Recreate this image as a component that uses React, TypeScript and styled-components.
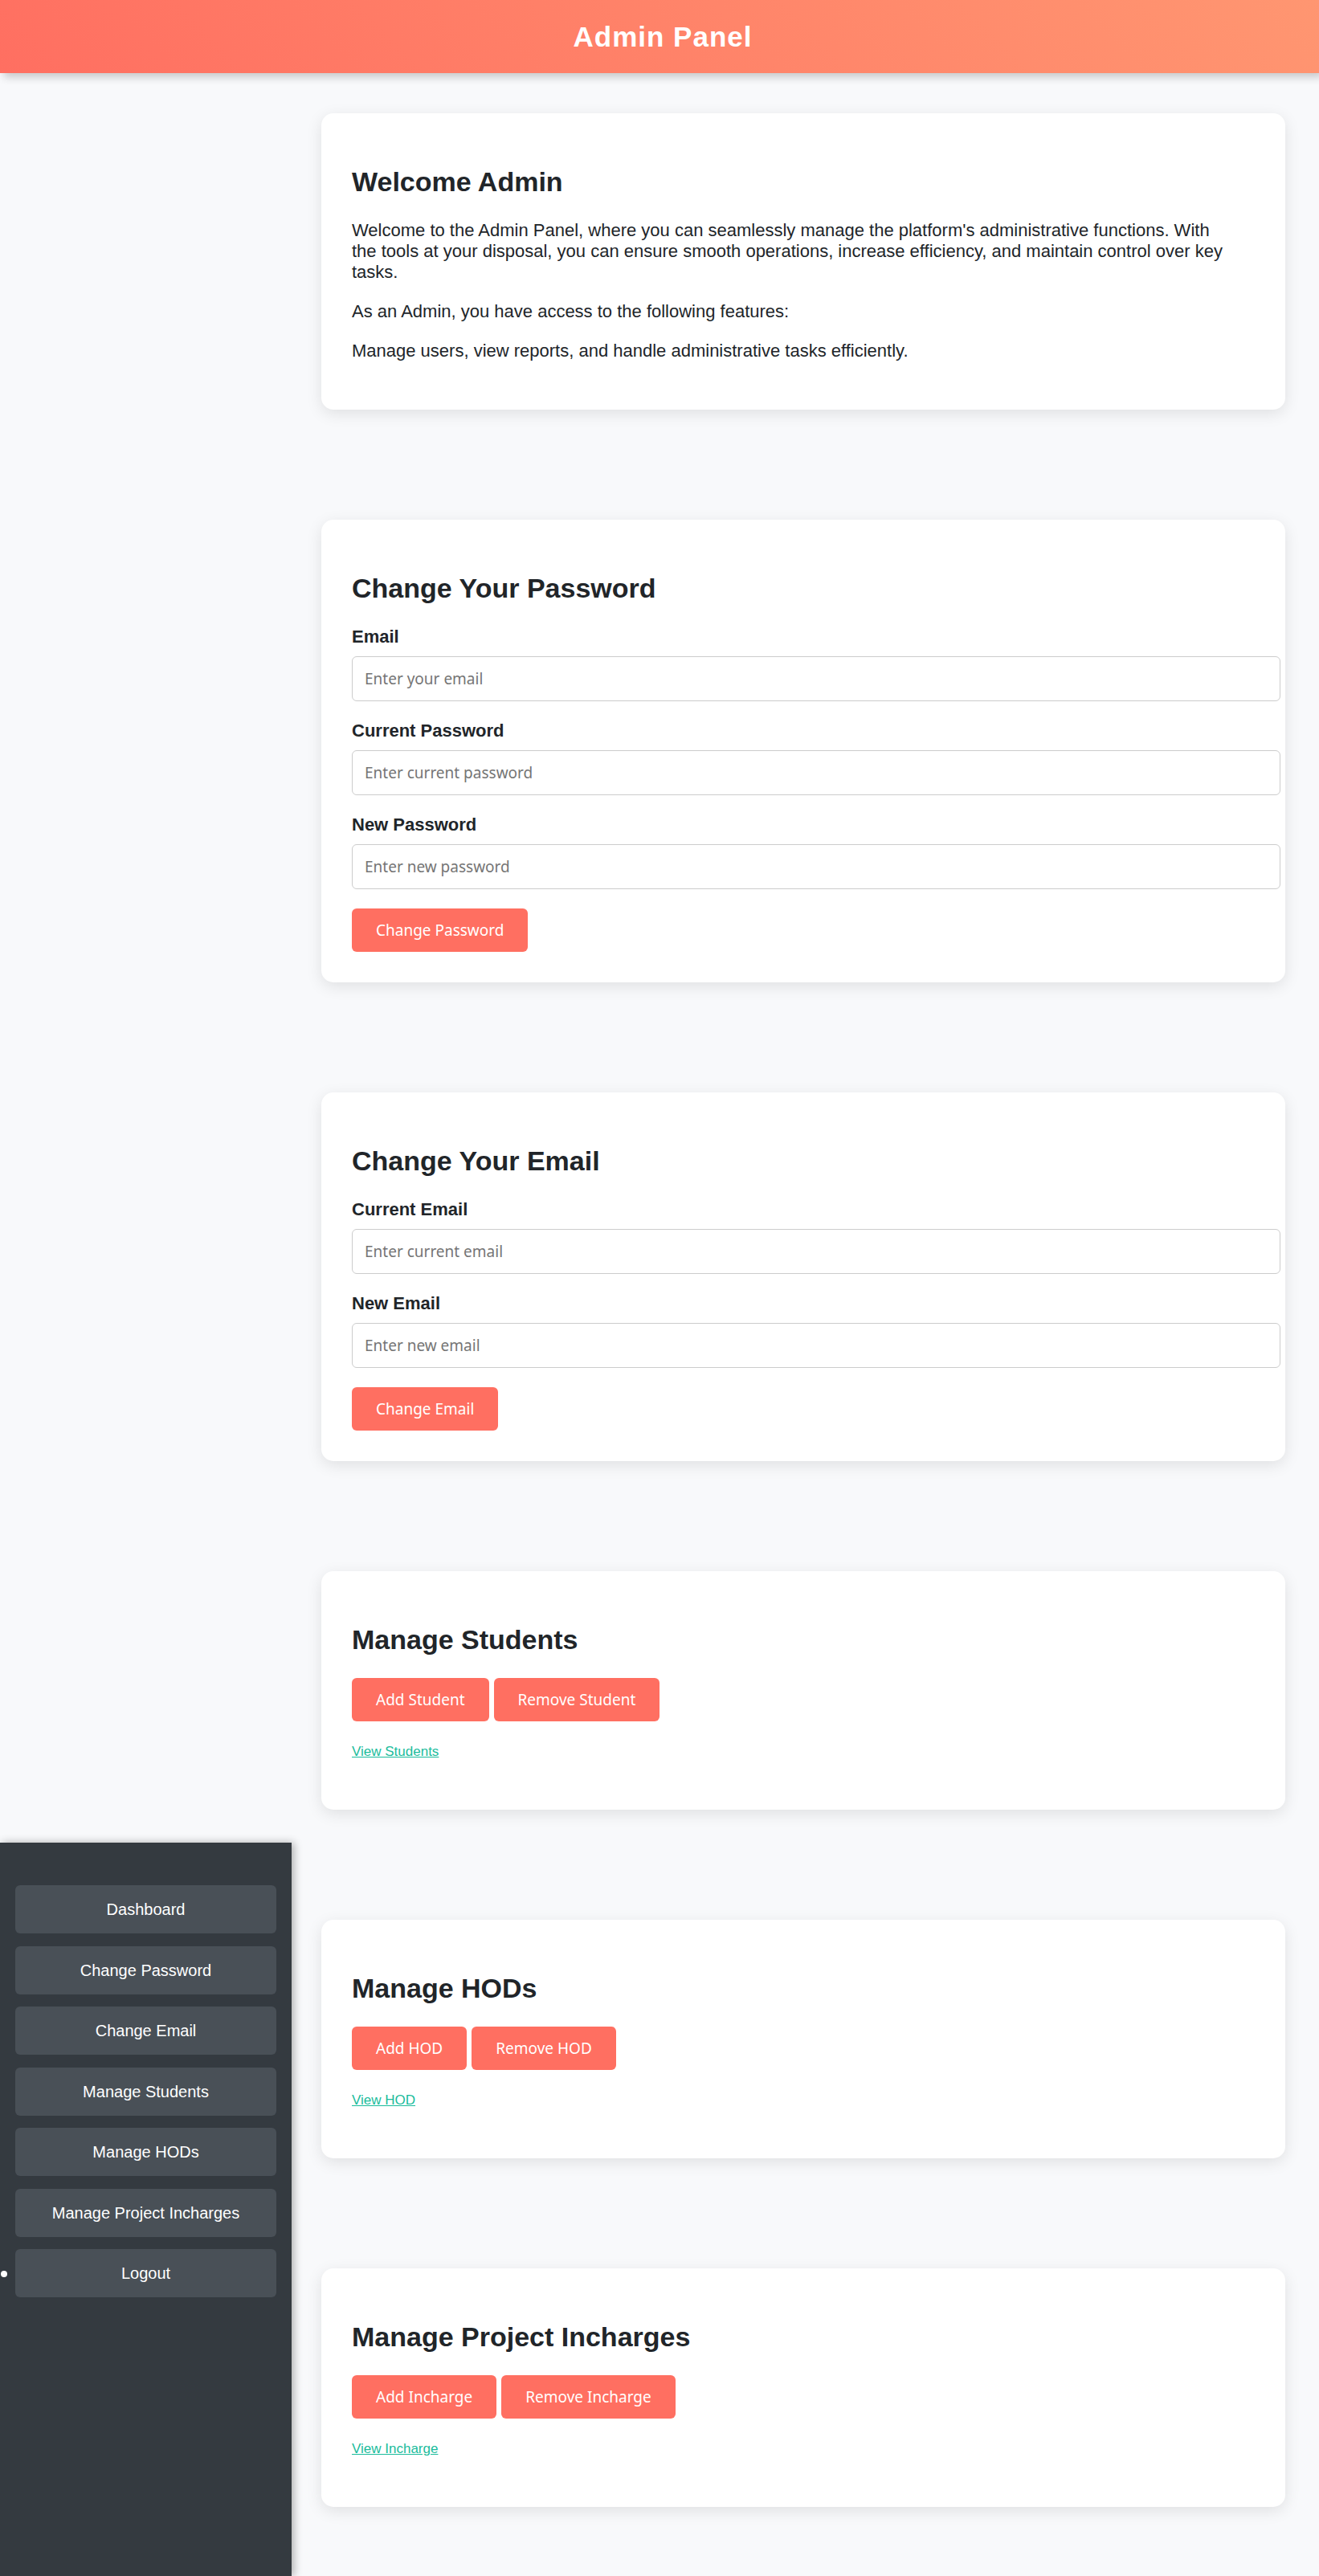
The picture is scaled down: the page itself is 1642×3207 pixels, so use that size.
import React from "react";
import styled, { createGlobalStyle } from "styled-components";

const sans = `"Liberation Sans", Arial, Helvetica, sans-serif`;
const controlFont = `"Noto Sans", Tahoma, sans-serif`;

const GlobalStyle = createGlobalStyle`
  body {
    margin: 0;
    background: #f8f9fb;
    color: #212529;
    font-family: ${sans};
    font-size: 22px;
  }
`;

const Page = styled.div`
  display: flex;
  flex-direction: column;
  min-height: 100vh;
`;

const Header = styled.header`
  position: relative;
  z-index: 1;
  padding: 25px 30px 25px 38px;
  background: linear-gradient(45deg, #ff6f61, #ff9671);
  box-shadow: 5px 5px 10px rgba(0, 0, 0, 0.2);
  text-align: center;
`;

const Title = styled.h1`
  margin: 0;
  color: #fff;
  font-size: 35px;
  line-height: 41px;
  letter-spacing: 1px;
`;

const Body = styled.div`
  flex: 1;
  display: grid;
  grid-template-columns: 363px minmax(0, 1fr);
`;

const Sidebar = styled.nav`
  align-self: end;
  box-sizing: border-box;
  min-height: 913px;
  padding: 53px 19px;
  background: #343a40;
  box-shadow: 3px 0 10px rgba(0, 0, 0, 0.3);
`;

const NavList = styled.ul`
  display: flex;
  flex-direction: column;
  justify-content: space-between;
  min-height: 513px;
  margin: 0;
  padding: 0;
  list-style: none;
`;

const NavItem = styled.li<{ $bullet?: boolean }>`
  position: relative;
  font-size: 20px;

  /* round bullet hanging in the sidebar's gutter */
  &::before {
    content: "";
    display: ${(p) => (p.$bullet ? "block" : "none")};
    position: absolute;
    top: 27px;
    left: -18px;
    width: 8px;
    height: 8px;
    border-radius: 50%;
    background: #fff;
  }
`;

const NavLink = styled.a`
  display: block;
  padding: 19px;
  border-radius: 6px;
  background: #495057;
  color: #fff;
  line-height: 22px;
  text-align: center;
  text-decoration: none;
`;

const Main = styled.main`
  display: flex;
  flex-direction: column;
  gap: 137px;
  padding: 50px 42px 86px 37px;
`;

const Card = styled.section`
  padding: 38px;
  border-radius: 15px;
  background: #fff;
  box-shadow: 0 5px 19px rgba(0, 0, 0, 0.1);
`;

const Heading = styled.h2`
  margin: 28px 0;
  font-size: 34px;
  line-height: 39px;
`;

const Text = styled.p`
  margin: 23px 0 22px;
  padding-right: 24px;
  line-height: 26px;
`;

const LinkRow = styled.p`
  margin: 23px 0;
  line-height: 26px;
`;

const ViewLink = styled.a`
  color: #1abc9c;
  font-size: 17px;
  line-height: 1;
`;

const Field = styled.div`
  margin-bottom: 24px;
`;

const Label = styled.label`
  display: block;
  margin-bottom: 11px;
  font-weight: bold;
  line-height: 26px;
`;

const Input = styled.input`
  box-sizing: content-box;
  display: block;
  width: 100%;
  height: 24px;
  padding: 15px;
  border: 1px solid #ccc;
  border-radius: 6px;
  background: #fff;
  font-family: ${controlFont};
  font-size: 19px;

  &::placeholder {
    color: #757575;
  }
`;

const ButtonRow = styled.div`
  display: flex;
  gap: 6px;
`;

const Button = styled.button`
  padding: 15px 30px;
  border: 0;
  border-radius: 6px;
  background: #ff6f61;
  color: #fff;
  font-family: ${controlFont};
  font-size: 19px;
  line-height: 24px;
  cursor: pointer;
`;

const navItems = [
  { label: "Dashboard", href: "#dashboard" },
  { label: "Change Password", href: "#change-password" },
  { label: "Change Email", href: "#change-email" },
  { label: "Manage Students", href: "#manage-students" },
  { label: "Manage HODs", href: "#manage-hods" },
  { label: "Manage Project Incharges", href: "#manage-incharges" },
  { label: "Logout", href: "#logout", bullet: true },
];

type FieldSpec = { id: string; label: string; type: string; placeholder: string };

const passwordFields: FieldSpec[] = [
  { id: "email", label: "Email", type: "email", placeholder: "Enter your email" },
  { id: "current-password", label: "Current Password", type: "password", placeholder: "Enter current password" },
  { id: "new-password", label: "New Password", type: "password", placeholder: "Enter new password" },
];

const emailFields: FieldSpec[] = [
  { id: "current-email", label: "Current Email", type: "email", placeholder: "Enter current email" },
  { id: "new-email", label: "New Email", type: "email", placeholder: "Enter new email" },
];

const manageCards = [
  { id: "manage-students", title: "Manage Students", noun: "Student", link: "View Students" },
  { id: "manage-hods", title: "Manage HODs", noun: "HOD", link: "View HOD" },
  { id: "manage-incharges", title: "Manage Project Incharges", noun: "Incharge", link: "View Incharge" },
];

function FormCard(props: { id: string; title: string; fields: FieldSpec[]; submit: string }) {
  return (
    <Card id={props.id}>
      <Heading>{props.title}</Heading>
      <form onSubmit={(e) => e.preventDefault()}>
        {props.fields.map((f) => (
          <Field key={f.id}>
            <Label htmlFor={f.id}>{f.label}</Label>
            <Input id={f.id} type={f.type} placeholder={f.placeholder} />
          </Field>
        ))}
        <ButtonRow>
          <Button type="submit">{props.submit}</Button>
        </ButtonRow>
      </form>
    </Card>
  );
}

export default function App() {
  return (
    <Page>
      <GlobalStyle />
      <Header>
        <Title>Admin Panel</Title>
      </Header>
      <Body>
        <Sidebar>
          <NavList>
            {navItems.map((item) => (
              <NavItem key={item.href} $bullet={item.bullet}>
                <NavLink href={item.href}>{item.label}</NavLink>
              </NavItem>
            ))}
          </NavList>
        </Sidebar>
        <Main>
          <Card id="dashboard">
            <Heading>Welcome Admin</Heading>
            <Text>
              Welcome to the Admin Panel, where you can seamlessly manage the platform's administrative
              functions. With the tools at your disposal, you can ensure smooth operations, increase
              efficiency, and maintain control over key tasks.
            </Text>
            <Text>As an Admin, you have access to the following features:</Text>
            <Text>Manage users, view reports, and handle administrative tasks efficiently.</Text>
          </Card>
          <FormCard
            id="change-password"
            title="Change Your Password"
            fields={passwordFields}
            submit="Change Password"
          />
          <FormCard id="change-email" title="Change Your Email" fields={emailFields} submit="Change Email" />
          {manageCards.map((c) => (
            <Card key={c.id} id={c.id}>
              <Heading>{c.title}</Heading>
              <ButtonRow>
                <Button type="button">Add {c.noun}</Button>
                <Button type="button">Remove {c.noun}</Button>
              </ButtonRow>
              <LinkRow>
                <ViewLink href={`#${c.id}`}>{c.link}</ViewLink>
              </LinkRow>
            </Card>
          ))}
        </Main>
      </Body>
    </Page>
  );
}
